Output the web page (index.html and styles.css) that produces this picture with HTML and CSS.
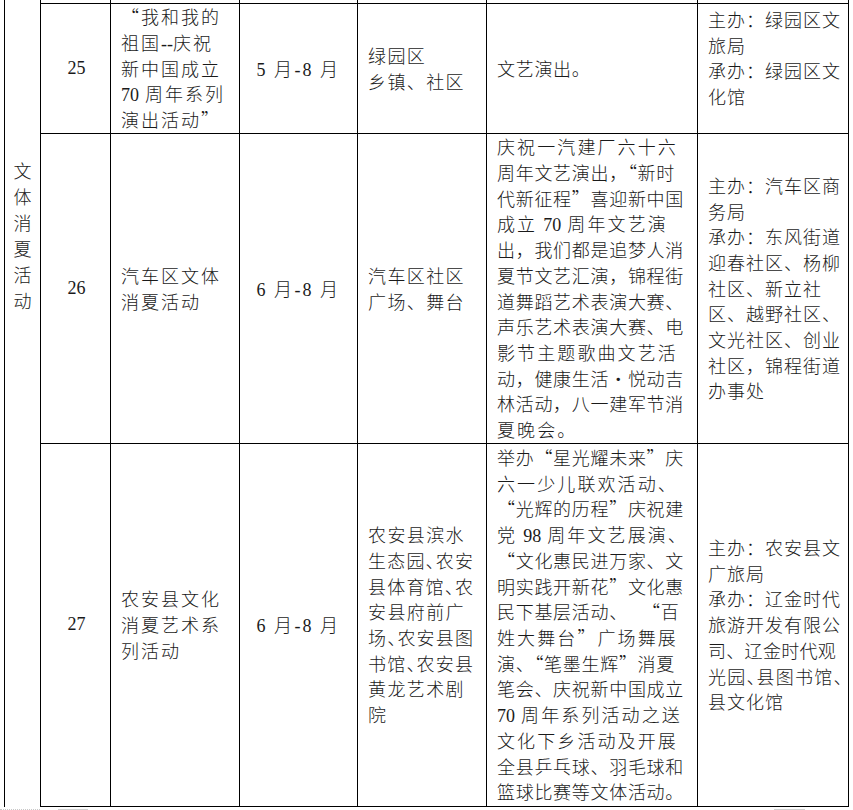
FILE: index.html
```html
<!DOCTYPE html>
<html lang="zh-CN">
<head>
<meta charset="utf-8">
<title>文体消夏活动</title>
<link rel="stylesheet" href="styles.css">
</head>
<body>
<table class="sheet">
  <colgroup>
    <col class="c-cat"><col class="c-no"><col class="c-name"><col class="c-date"><col class="c-loc"><col class="c-text"><col class="c-org">
  </colgroup>
  <tr class="stub">
    <td class="cat" rowspan="4">文<br>体<br>消<br>夏<br>活<br>动</td>
    <td></td><td></td><td></td><td></td><td></td><td></td>
  </tr>
  <tr class="r25">
    <td class="no">25</td>
    <td class="name">“我和我的<br>祖国<span class="n">--</span>庆祝<br>新中国成立<br><span class="n">70</span> 周年系列<br>演出活动”</td>
    <td class="date"><span class="n">5 </span>月<span class="n">-8 </span>月</td>
    <td class="loc">绿园区<br>乡镇、社区</td>
    <td class="text">文艺演出。</td>
    <td class="org top">主办：绿园区文<br>旅局<br>承办：绿园区文<br>化馆</td>
  </tr>
  <tr class="r26">
    <td class="no">26</td>
    <td class="name">汽车区文体<br>消夏活动</td>
    <td class="date"><span class="n">6 </span>月<span class="n">-8 </span>月</td>
    <td class="loc">汽车区社区<br>广场、舞台</td>
    <td class="text"><span class="w">庆祝一汽建厂六十六</span><br>周年文艺演出，“新时<br>代新征程”喜迎新中国<br><span class="w">成立 <span class="n">70</span> 周年文艺演</span><br>出，我们都是追梦人消<br>夏节文艺汇演，锦程街<br>道舞蹈艺术表演大赛、<br>声乐艺术表演大赛、电<br><span class="w">影节主题歌曲文艺活</span><br>动，健康生活•悦动吉<br>林活动，八一建军节消<br><span class="w">夏晚会。</span></td>
    <td class="org">主办：汽车区商<br>务局<br>承办：东风街道<br>迎春社区、杨柳<br>社区、新立社<br>区、越野社区、<br>文光社区、创业<br>社区，锦程街道<br>办事处</td>
  </tr>
  <tr class="r27">
    <td class="no">27</td>
    <td class="name">农安县文化<br>消夏艺术系<br>列活动</td>
    <td class="date"><span class="n">6 </span>月<span class="n">-8 </span>月</td>
    <td class="loc">农安县滨水<br><span class="h">生态园、农安</span><br><span class="h">县体育馆、农</span><br>安县府前广<br><span class="h">场、农安县图</span><br><span class="h">书馆、农安县</span><br>黄龙艺术剧<br>院</td>
    <td class="text">举办“星光耀未来”庆<br><span class="w">六一少儿联欢活动、</span><br>“光辉的历程”庆祝建<br><span class="w">党 <span class="n">98</span> 周年文艺展演、</span><br>“文化惠民进万家、文<br>明实践开新花”文化惠<br>民下基层活动、&nbsp;&nbsp;&nbsp;“百<br><span class="w">姓大舞台”广场舞展</span><br>演、“笔墨生辉”消夏<br>笔会、庆祝新中国成立<br><span class="w"><span class="n">70</span> 周年系列活动之送</span><br><span class="w">文化下乡活动及开展</span><br>全县乒乓球、羽毛球和<br>篮球比赛等文体活动。</td>
    <td class="org">主办：农安县文<br>广旅局<br>承办：辽金时代<br>旅游开发有限公<br><span class="tight">司、辽金时代观</span><br><span class="h">光园、县图书馆、</span><br>县文化馆</td>
  </tr>
</table>
<div class="marks">
  <span class="dots"></span>
  <span class="crop-l"></span>
  <span class="crop-r"></span>
</div>
</body>
</html>
```

FILE: styles.css
```css
html, body {
  margin: 0;
  padding: 0;
  background: #fff;
}

body {
  font-family: "Noto Sans CJK SC", sans-serif;
  font-size: 18px;
  font-weight: 300;
  color: #1a1a1a;
}

.sheet {
  border-collapse: collapse;
  table-layout: fixed;
  width: 845px;
  margin-left: 4px;
}

.c-cat { width: 36px; }
.c-no { width: 70px; }
.c-name { width: 129px; }
.c-date { width: 118px; }
.c-loc { width: 129px; }
.c-text { width: 211px; }
.c-org { width: 151px; }

.sheet td {
  border: 1px solid #000;
  padding: 0 1px 0 10px;
  line-height: 25.7px;
  white-space: nowrap;
  vertical-align: middle;
  overflow: visible;
}

.stub td {
  height: 3px;
  border-top: none;
  padding: 0;
  line-height: 0;
  font-size: 0;
}

.sheet td.cat {
  border-top: none;
  border-bottom: none;
  vertical-align: top;
  padding: 157px 0 0 0;
  text-align: center;
  font-size: 18px;
  line-height: 26px;
}

.r25 { height: 130px; }
.r26 { height: 310px; }
.r27 { height: 363px; }

.sheet td.no {
  padding: 0 0 0 2px;
  text-align: center;
  font-family: "Liberation Serif", serif;
  font-weight: 400;
}

.n {
  font-family: "Liberation Serif", serif;
  font-weight: 400;
  letter-spacing: 0;
  line-height: 1;
}

.name { letter-spacing: 2px; }

.sheet td.date {
  padding: 0;
  text-align: center;
  letter-spacing: 2.5px;
}

.date .n { letter-spacing: 2px; }

.loc { letter-spacing: 1.4px; }

.text { letter-spacing: 0.7px; padding-left: 9px; }

.w { letter-spacing: 2.1px; }

.org { letter-spacing: 1px; }

.tight { letter-spacing: 0.3px; }

.sheet td.top {
  vertical-align: top;
  padding-top: 3px;
}

.h {
  font-feature-settings: "halt" 1;
  letter-spacing: 1.2px;
}

.marks {
  display: flex;
  align-items: flex-start;
  height: 5px;
  padding-top: 2px;
}

.dots {
  width: 40px;
  border-top: 1px dotted #c8c8c8;
}

.crop-l {
  margin-left: 18px;
  width: 29px;
  height: 3px;
  border-top: 1px solid #cfcfcf;
  border-right: 1px solid #cfcfcf;
}

.crop-r {
  margin-left: 686px;
  width: 30px;
  height: 3px;
  border-top: 1px solid #cfcfcf;
  border-left: 1px solid #cfcfcf;
}
```
